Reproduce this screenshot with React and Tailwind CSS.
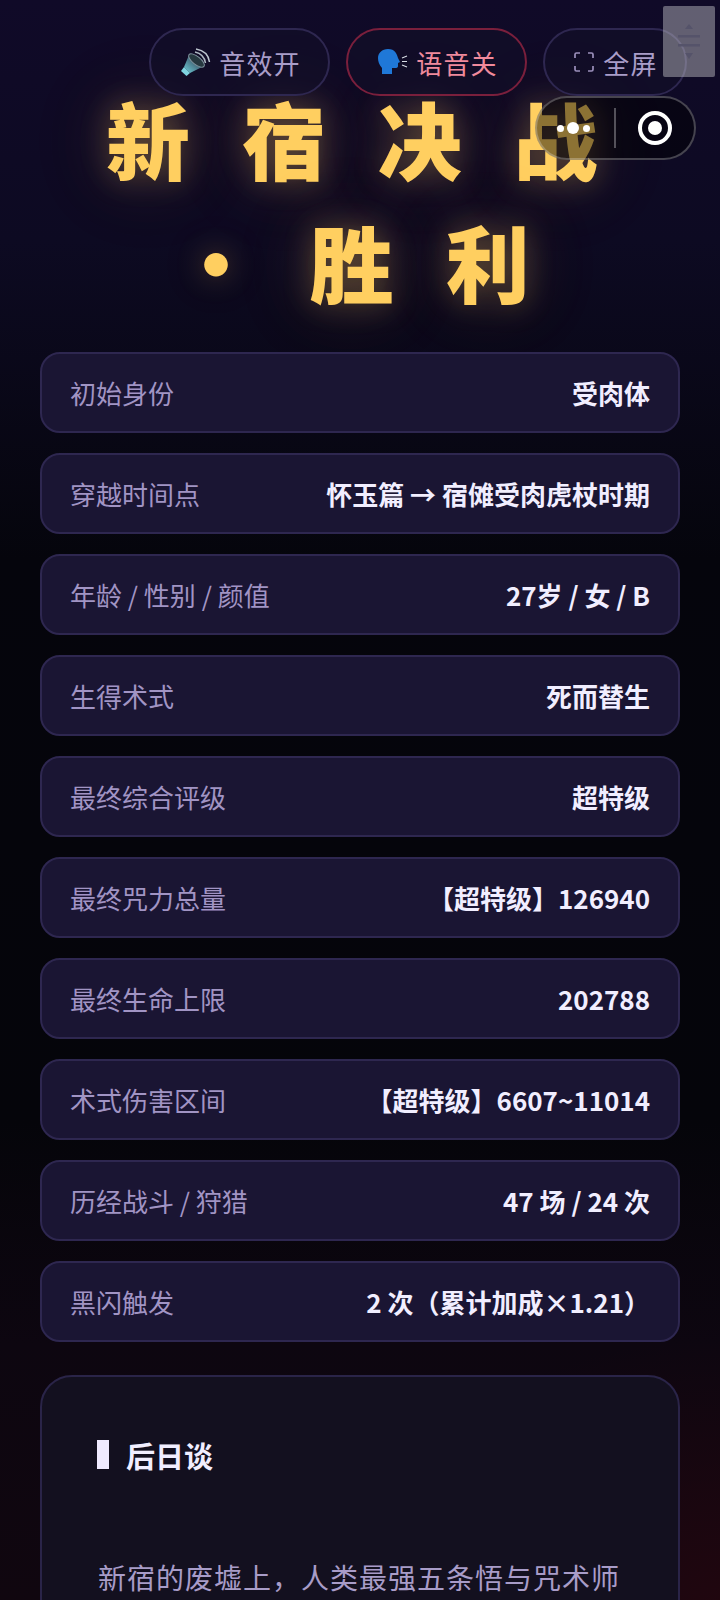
import React from "react";

const rows = [
  ["初始身份", "受肉体"],
  ["穿越时间点", "怀玉篇 → 宿傩受肉虎杖时期"],
  ["年龄 / 性别 / 颜值", "27岁 / 女 / B"],
  ["生得术式", "死而替生"],
  ["最终综合评级", "超特级"],
  ["最终咒力总量", "【超特级】126940"],
  ["最终生命上限", "202788"],
  ["术式伤害区间", "【超特级】6607~11014"],
  ["历经战斗 / 狩猎", "47 场 / 24 次"],
  ["黑闪触发", "2 次（累计加成×1.21）"],
];

function SpeakerIcon() {
  return (
    <svg width="30" height="28" viewBox="0 0 30 28" className="shrink-0 translate-x-[3px]">
      <defs>
        <linearGradient id="cone" x1="0" y1="1" x2="1" y2="0">
          <stop offset="0" stopColor="#6fd0dc" />
          <stop offset="0.5" stopColor="#4a7686" />
          <stop offset="1" stopColor="#66747e" />
        </linearGradient>
      </defs>
      <path d="M8 7 L23 18 L9 25 L3 19Z" fill="url(#cone)" />
      <path d="M3 19 L9 25 L5.5 28 L0 23Z" fill="#7fd4e0" />
      <ellipse cx="15.5" cy="12.5" rx="9.5" ry="4" transform="rotate(38 15.5 12.5)" fill="#26383f" stroke="#7f939d" strokeWidth="1" />
      <path d="M14 4 Q23 6 24.5 15" fill="none" stroke="#aeb8c2" strokeWidth="1.5" />
      <path d="M15 1 Q27 3 28.5 14" fill="none" stroke="#bcc5ce" strokeWidth="1.5" />
    </svg>
  );
}

function HeadIcon() {
  return (
    <svg width="30" height="26" viewBox="0 0 30 26" className="shrink-0 translate-x-[3px]">
      <path
        d="M10 0 C17 0 19 5 20 9 L22 13 L20 14 L20 17 Q20 19 17 19 L14 19 L14 25 L4 25 L4 19 C1 16 0 12 0 9 C0 4 4 0 10 0Z"
        fill="#1f78d8"
      />
      <path d="M24 9 L29 7 M24 12.5 L29 12.5 M24 16 L29 18" stroke="#d8dde5" strokeWidth="1.1" fill="none" />
    </svg>
  );
}

function FullIcon() {
  return (
    <svg width="20" height="20" viewBox="0 0 20 20" fill="none" stroke="#9c90bc" strokeWidth="1.7" className="shrink-0 translate-x-[2px]">
      <path d="M1 6 V2.5 Q1 1 2.5 1 H6 M14 1 H17.5 Q19 1 19 2.5 V6 M19 14 V17.5 Q19 19 17.5 19 H14 M6 19 H2.5 Q1 19 1 17.5 V14" />
    </svg>
  );
}

export default function App() {
  return (
    <div
      className="relative h-[1600px] w-[720px] overflow-hidden bg-[radial-gradient(ellipse_360px_260px_at_100%_100%,#20060f,transparent),linear-gradient(180deg,#100a28_0%,#0d0a22_15%,#05050c_35%,#05050a_70%,#0d0610_84%,#10060f_100%)] px-10 pt-[76px] text-[#a89cc8]"
      style={{ fontFamily: '"Noto Sans CJK SC", sans-serif' }}
    >
      <h1 className="text-center text-[84px] font-black leading-[123px] tracking-[16.3px] text-[#ffcf60] [text-shadow:0_0_30px_rgba(255,200,90,0.3),0_0_70px_rgba(255,190,80,0.15),0_0_110px_rgba(255,190,80,0.1)]">
        新 宿 决 战 ・ 胜 利
      </h1>

      <div className="mt-[29.5px] flex flex-col gap-5">
        {rows.map(([k, v]) => (
          <div
            key={k}
            className="flex h-[81.1px] items-center justify-between rounded-[20px] border-2 border-[#2e2750] bg-[#1a1533] px-[28px] text-[26px]"
          >
            <span className="text-[#a194c4]">{k}</span>
            <span className="font-bold text-[#f1eeff]">{v}</span>
          </div>
        ))}
      </div>

      <div className="mt-[32.5px] h-[400px] rounded-[32px] border-2 border-[#2a2448] bg-[#13101f] pl-[55px] pr-[20px] pt-[58px]">
        <div className="flex items-center gap-[17px] text-[29px] font-bold leading-[40px] text-[#f1eeff]">
          <span className="h-[29px] w-3 bg-[#efeaff]" />
          后日谈
        </div>
        <p className="ml-px mt-[82px] whitespace-nowrap text-[28px] tracking-[1px] leading-[40px] text-[#a89cc8]">
          新宿的废墟上，人类最强五条悟与咒术师
        </p>
      </div>

      <div className="absolute left-[149px] top-[28px] flex gap-4 text-[26px] tracking-[1.2px]">
        <button className="flex h-[68px] w-[181px] items-center justify-center gap-[11px] rounded-full border-2 border-[#2e2750] bg-[#120e28]/70 text-[#a99dc9]">
          <SpeakerIcon />
          音效开
        </button>
        <button className="flex h-[68px] w-[181px] items-center justify-center gap-[11px] rounded-full border-2 border-[#7a1f3c] bg-[#120e28]/70 text-[#f08a9c]">
          <HeadIcon />
          语音关
        </button>
        <button className="flex h-[68px] w-[144px] items-center justify-center gap-[11px] rounded-full border-2 border-[#2e2750] bg-[#120e28]/70 text-[#a99dc9]">
          <FullIcon />
          全屏
        </button>
      </div>

      <div className="absolute left-[535px] top-[96px] flex h-[64px] w-[161px] items-center rounded-full border-2 border-white/25 bg-black/45">
        <div className="flex w-[72px] items-center justify-center gap-[3.5px]">
          <span className="h-[7px] w-[7px] rounded-full bg-white" />
          <span className="h-[12px] w-[12px] rounded-full bg-white" />
          <span className="h-[7px] w-[7px] rounded-full bg-white" />
        </div>
        <span className="ml-[5px] h-[40px] w-[2px] bg-white/30" />
        <div className="flex flex-1 items-center justify-center">
          <span className="flex h-[34px] w-[34px] items-center justify-center rounded-full border-4 border-white">
            <span className="h-[14px] w-[14px] rounded-full bg-white" />
          </span>
        </div>
      </div>

      <div className="absolute left-[663px] top-[6px] flex h-[71px] w-[52px] flex-col items-center justify-center rounded-[2px] bg-[#c8c8cc]/45">
        <svg width="24" height="36" viewBox="0 0 24 36" fill="#55536a">
          <path d="M12 0 L16 5 H8Z" />
          <rect x="1" y="11" width="22" height="2.5" />
          <rect x="1" y="20" width="22" height="2.5" />
          <path d="M12 35 L16 29 H8Z" />
        </svg>
      </div>
    </div>
  );
}
